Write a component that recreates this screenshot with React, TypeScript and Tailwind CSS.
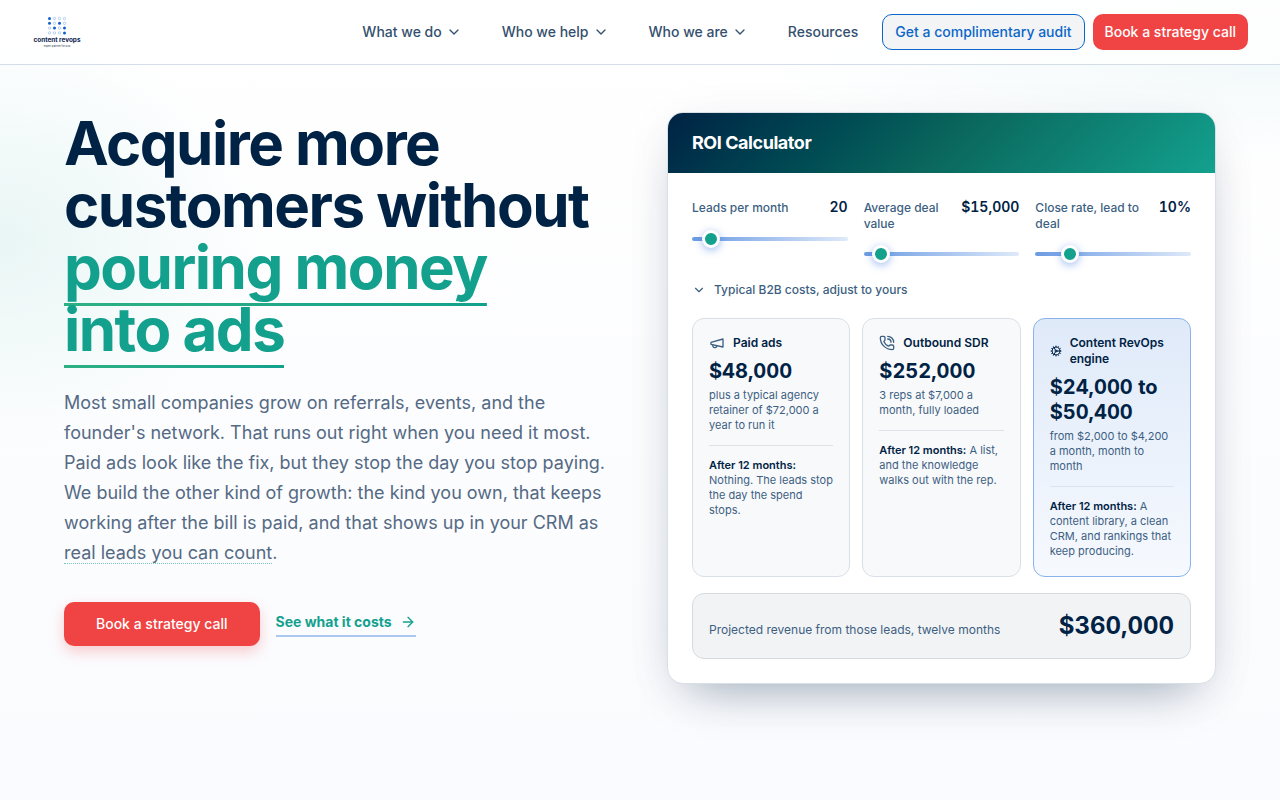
import { useState } from "react"
import { ArrowRight, ChevronDown, Cog, PhoneCall } from "lucide-react"

interface SliderProps {
  id: string
  label: string
  value: number
  min: number
  max: number
  step: number
  format: (value: number) => string
  onChange: (value: number) => void
}

const navItems = [
  { label: "What we do", menu: true },
  { label: "Who we help", menu: true },
  { label: "Who we are", menu: true },
  { label: "Resources", menu: false },
]

const logoDots = ["1000", "1010", "0101", "0001"]

const formatMoney = (value: number) => `$${value.toLocaleString("en-US")}`

function Logo() {
  return (
    <svg viewBox="0 0 50 32" className="h-8 w-[50px]" role="img" aria-label="content revops">
      {logoDots.map((row, y) =>
        row.split("").map((dot, x) => (
          <circle
            key={`${x}-${y}`}
            cx={17.5 + x * 5}
            cy={2.5 + y * 4.8}
            r={dot === "1" ? 1.5 : 1.2}
            fill={dot === "1" ? "#1160cf" : "#fff"}
            stroke={dot === "1" ? "none" : "#8db4ec"}
            strokeWidth="0.6"
          />
        ))
      )}
      <text
        x="25"
        y="25.5"
        textAnchor="middle"
        fontFamily="Inter, sans-serif"
        fontSize="6.4"
        fontWeight="700"
        fill="#0c2450"
      >
        content revops
      </text>
      <text
        x="25"
        y="30.5"
        textAnchor="middle"
        fontFamily="Inter, sans-serif"
        fontSize="2.5"
        fontWeight="500"
        fill="#3d4f68"
      >
        expert partner for b2b
      </text>
    </svg>
  )
}

function MegaphoneIcon() {
  return (
    <svg
      viewBox="0 0 24 24"
      fill="none"
      stroke="currentColor"
      strokeWidth="2"
      strokeLinecap="round"
      strokeLinejoin="round"
      className="size-4 text-[#3d5f82]"
      aria-hidden="true"
    >
      <path d="m3 11 18-5v12L3 14v-3z" />
      <path d="M11.6 16.8a3 3 0 1 1-5.8-1.6" />
    </svg>
  )
}

const channels = [
  {
    name: "Paid ads",
    icon: <MegaphoneIcon />,
    cost: "$48,000",
    detail: "plus a typical agency retainer of $72,000 a year to run it",
    after: "Nothing. The leads stop the day the spend stops.",
    highlight: false,
  },
  {
    name: "Outbound SDR",
    icon: <PhoneCall className="size-4 text-[#3d5f82]" />,
    cost: "$252,000",
    detail: "3 reps at $7,000 a month, fully loaded",
    after: "A list, and the knowledge walks out with the rep.",
    highlight: false,
  },
  {
    name: "Content RevOps engine",
    icon: <Cog className="size-3 shrink-0 text-[#002244]" />,
    cost: "$24,000 to $50,400",
    detail: "from $2,000 to $4,200 a month, month to month",
    after: "A content library, a clean CRM, and rankings that keep producing.",
    highlight: true,
  },
]

function Header() {
  return (
    <header className="relative flex h-16 items-center justify-between bg-white/80 px-8 shadow-[0_1px_0_#d5dee8]">
      <a href="#">
        <Logo />
      </a>
      <div className="flex items-center gap-2">
        <nav className="flex items-center gap-2">
          {navItems.map((item) =>
            item.menu ? (
              <button
                key={item.label}
                type="button"
                className="flex items-center gap-1 px-4 text-sm font-medium text-[#34506e]"
              >
                {item.label}
                <ChevronDown className="size-4" />
              </button>
            ) : (
              <a key={item.label} href="#" className="px-4 text-sm font-medium text-[#34506e]">
                {item.label}
              </a>
            )
          )}
        </nav>
        <a
          href="#"
          className="flex h-9 items-center rounded-[10px] border border-[#0b66c8] bg-[#f3f4f6] px-3 text-sm font-medium text-[#0b66c8]"
        >
          Get a complimentary audit
        </a>
        <a
          href="#"
          className="flex h-9 items-center rounded-[10px] bg-[#f04444] px-3 text-sm font-medium text-white"
        >
          Book a strategy call
        </a>
      </div>
    </header>
  )
}

function Slider({ id, label, value, min, max, step, format, onChange }: SliderProps) {
  return (
    <div>
      <div className="flex items-baseline justify-between gap-2">
        <label htmlFor={id} className="text-xs font-medium text-[#3d5f82]">
          {label}
        </label>
        <output htmlFor={id} className="text-sm font-semibold text-[#002244] tabular-nums">
          {format(value)}
        </output>
      </div>
      <input
        id={id}
        type="range"
        min={min}
        max={max}
        step={step}
        value={value}
        onChange={(e) => onChange(Number(e.target.value))}
        className="mt-5 block h-1 w-full appearance-none rounded-full bg-linear-to-r from-[#6b9be2] to-[#dfe9f9] [&::-webkit-slider-thumb]:size-[18px] [&::-webkit-slider-thumb]:appearance-none [&::-webkit-slider-thumb]:rounded-full [&::-webkit-slider-thumb]:border-3 [&::-webkit-slider-thumb]:border-white [&::-webkit-slider-thumb]:bg-[#13a18e] [&::-webkit-slider-thumb]:shadow-[0_2px_8px_rgba(30,100,220,0.45)]"
      />
    </div>
  )
}

function RoiCalculator() {
  const [leads, setLeads] = useState(20)
  const [dealValue, setDealValue] = useState(15000)
  const [closeRate, setCloseRate] = useState(10)

  const revenue = Math.round((leads * 12 * dealValue * closeRate) / 1000) * 10

  return (
    <section className="overflow-hidden rounded-2xl border border-[#d9dfe6] bg-white shadow-[0_24px_48px_-24px_rgba(0,34,68,0.4),0_8px_48px_rgba(0,34,68,0.06)]">
      <h2 className="bg-linear-135 from-[#002244] via-[#0a665c] to-[#13a18e] px-6 py-4 text-lg leading-7 font-bold tracking-tight text-white">
        ROI Calculator
      </h2>
      <div className="p-6">
        <div className="grid grid-cols-3 gap-4">
          <Slider
            id="leads"
            label="Leads per month"
            value={leads}
            min={5}
            max={220}
            step={5}
            format={String}
            onChange={setLeads}
          />
          <Slider
            id="deal-value"
            label="Average deal value"
            value={dealValue}
            min={1000}
            max={225000}
            step={1000}
            format={formatMoney}
            onChange={setDealValue}
          />
          <Slider
            id="close-rate"
            label="Close rate, lead to deal"
            value={closeRate}
            min={1}
            max={50}
            step={1}
            format={(value) => `${value}%`}
            onChange={setCloseRate}
          />
        </div>

        <button
          type="button"
          className="mt-6.5 flex items-center gap-2 text-xs font-medium text-[#3d5f82]"
        >
          <ChevronDown className="size-3.5" />
          Typical B2B costs, adjust to yours
        </button>

        <div className="mt-5 grid grid-cols-3 gap-3">
          {channels.map((channel) => (
            <article
              key={channel.name}
              className={
                channel.highlight
                  ? "rounded-xl border border-[#8ab2ec] bg-linear-to-b from-[#dfeaf9] to-[#f6f9fe] px-4 pt-4 pb-[17px]"
                  : "rounded-xl border border-[#d9dfe8] bg-[#f8f9fb] px-4 pt-4 pb-[17px]"
              }
            >
              <h3 className="flex items-center gap-2 text-xs font-semibold text-[#002244]">
                {channel.icon}
                {channel.name}
              </h3>
              <p className="mt-2 text-xl leading-[25px] font-bold text-[#002244] tabular-nums">
                {channel.cost}
              </p>
              <p className="mt-1 text-[11px] leading-[15px] text-[#3d5f82]">{channel.detail}</p>
              <p className="mt-3 border-t border-[#dde2e9] pt-3 text-[11px] leading-[15px] text-[#3d5f82]">
                <strong className="font-semibold text-[#002244]">After 12 months:</strong>{" "}
                {channel.after}
              </p>
            </article>
          ))}
        </div>

        <div className="mt-4 flex items-baseline justify-between rounded-xl border border-[#d6dade] bg-[#f2f3f5] p-4">
          <span className="text-xs text-[#3d5f82]">
            Projected revenue from those leads, twelve months
          </span>
          <strong className="text-2xl font-bold text-[#002244] tabular-nums">
            {formatMoney(revenue)}
          </strong>
        </div>
      </div>
    </section>
  )
}

export default function App() {
  return (
    <div className="min-h-screen bg-[radial-gradient(ellipse_20%_210px_at_0%_240px,#e9f6f5,transparent),radial-gradient(ellipse_40%_100px_at_100%_60px,#f2f9fa,transparent),linear-gradient(#ffffff,#fafbfe)] font-[Inter,sans-serif]">
      <Header />
      <main className="mx-auto grid max-w-7xl grid-cols-[547fr_549fr] items-start gap-14 px-16 py-12">
        <div>
          <h1 className="max-w-[540px] text-[60px] leading-[62px] font-bold tracking-tight text-[#002244]">
            Acquire more customers without{" "}
            <span className="bg-linear-to-r from-[#2eb082] to-[#13a18e] bg-[length:100%_3px] bg-bottom bg-no-repeat box-decoration-clone pb-[3px] text-[#13a18e]">
              pouring money into ads
            </span>
          </h1>
          <p className="mt-7 text-lg leading-[30px] text-[#546a84]">
            Most small companies grow on referrals, events, and the founder's network. That runs
            out right when you need it most. Paid ads look like the fix, but they stop the day you
            stop paying. We build the other kind of growth: the kind you own, that keeps working
            after the bill is paid, and that shows up in your CRM as{" "}
            <a href="#" className="border-b border-dotted border-[#7cc7bd]">
              real leads you can count
            </a>
            .
          </p>
          <div className="mt-8.5 flex items-center gap-4">
            <a
              href="#"
              className="flex h-11 items-center rounded-[10px] bg-[#f04444] px-8 text-sm font-medium text-white shadow-[0_6px_14px_rgba(240,68,68,0.25)]"
            >
              Book a strategy call
            </a>
            <a
              href="#"
              className="flex items-center gap-2 border-b-2 border-[#adc8ef] pb-0.5 text-sm leading-[22px] font-bold text-[#13a18e]"
            >
              See what it costs
              <ArrowRight className="size-4" />
            </a>
          </div>
        </div>
        <RoiCalculator />
      </main>
    </div>
  )
}
